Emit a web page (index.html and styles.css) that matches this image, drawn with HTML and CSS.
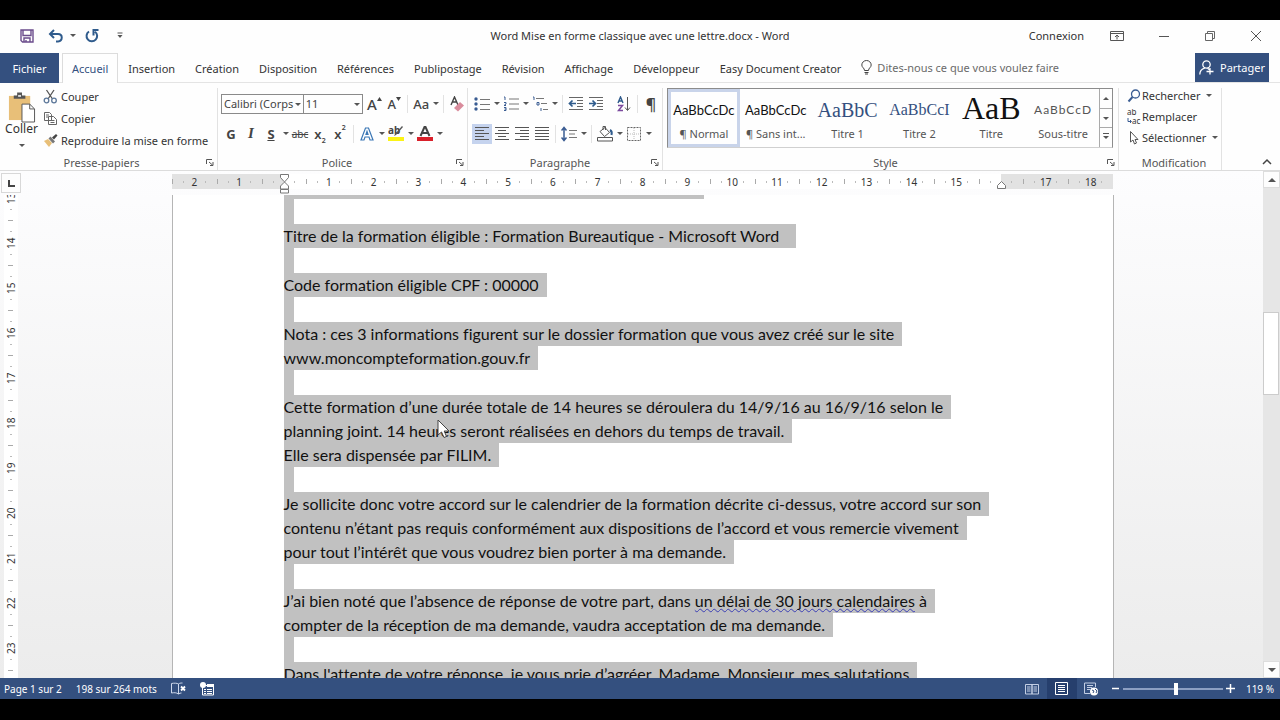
FILE: index.html
```html
<!DOCTYPE html>
<html lang="fr">
<head>
<meta charset="utf-8">
<meta name="viewport" content="width=device-width, initial-scale=1">
<title>Word Mise en forme classique avec une lettre.docx - Word</title>
<link rel="stylesheet" href="styles.css">
</head>
<body>
<div class="app">
  <header class="titlebar">
    <div class="quick">
      <button class="icon" aria-label="Enregistrer"><svg width="14" height="14" viewBox="0 0 14 14" fill="none" stroke="#6b4c8c" stroke-width="1.4"><path d="M1 1h12v12H2.500L1 11.500zM3 1v5.500h8V1M4 13V9h6v4M6 11v2"/></svg></button>
      <button class="icon" aria-label="Annuler"><svg width="16" height="14" viewBox="0 0 16 14" fill="none" stroke="#2f5b8c" stroke-width="2"><path d="M6 1L2 5l4 4M2.500 5H10c5 0 5 7 0 7.500H8"/></svg></button>
      <button class="arrow" aria-label="Options d’annulation"></button>
      <button class="icon redo" aria-label="Répéter"><svg width="16" height="15" viewBox="0 0 16 15" fill="none" stroke="#2f5b8c" stroke-width="2"><path d="M5 3.500a5.300 5.300 0 1 0 6 .2M9.500 7.500V2h5"/></svg></button>
      <button class="icon more" aria-label="Personnaliser"><svg width="8" height="7" viewBox="0 0 8 7"><path d="M1.500 1h5" stroke="#555"/><path d="M1.500 3h5L4 6z" fill="#555"/></svg></button>
    </div>
    <h1 class="doc-title">Word Mise en forme classique avec une lettre.docx - Word</h1>
    <div class="window-controls">
      <button class="connect">Connexion</button>
      <button class="icon" aria-label="Options du ruban"><svg width="14" height="12" viewBox="0 0 14 12" fill="none" stroke="#555"><path d="M.5 1.500h13v9H.5zM.5 3.500h13M7 9.500v-4M5 7l2-2 2 2"/></svg></button>
      <button class="icon" aria-label="Réduire"><svg width="12" height="12" viewBox="0 0 12 12" stroke="#555"><path d="M1 6.500h10"/></svg></button>
      <button class="icon" aria-label="Restaurer"><svg width="12" height="12" viewBox="0 0 12 12" fill="none" stroke="#666"><path d="M1.500 3.500h7v7h-7zM3.500 3.500v-2h7v7h-2"/></svg></button>
      <button class="icon" aria-label="Fermer"><svg width="12" height="12" viewBox="0 0 12 12" stroke="#555"><path d="M1 1l10 10M11 1L1 11"/></svg></button>
    </div>
  </header>

  <nav class="tabs">
    <button class="file">Fichier</button>
    <button class="tab active">Accueil</button>
    <button class="tab">Insertion</button>
    <button class="tab">Création</button>
    <button class="tab">Disposition</button>
    <button class="tab">Références</button>
    <button class="tab">Publipostage</button>
    <button class="tab">Révision</button>
    <button class="tab">Affichage</button>
    <button class="tab">Développeur</button>
    <button class="tab">Easy Document Creator</button>
    <button class="tell"><svg width="11" height="15" viewBox="0 0 11 15" fill="none" stroke="#444"><path d="M3.500 10.500C3.500 8 .8 7.500.8 5a4.700 4.500 0 0 1 9.400 0c0 2.500-2.700 3-2.700 5.500zM3.500 12.500h4M4 14h3"/></svg>Dites-nous ce que vous voulez faire</button>
    <button class="share"><svg width="15" height="15" viewBox="0 0 15 15" fill="none" stroke="#fff" stroke-width="1.300"><circle cx="7.500" cy="4.500" r="3.700"/><path d="M.8 14.500c0-3.500 2-5.500 5-6.300M8.500 8.200l2 1.500M11 8v6.500M7.500 11.500h7"/></svg>Partager</button>
  </nav>

  <section class="ribbon">
    <div class="group clipboard">
      <div class="clip-body">
        <button class="paste"><svg width="29" height="31" viewBox="0 0 30 32"><path d="M2 4h22v25H2z" fill="#e8bf78"/><path d="M7 3.500h3.500V.5h5v3H19V7H7z" fill="#555"/><path d="M11.500 3h3v2h-3z" fill="#ddd"/><path d="M15.500 12.500h8l5 5v13.500h-13z" fill="#fff" stroke="#555"/><path d="M23.500 12.500v5h5" fill="none" stroke="#555"/></svg><span>Coller</span><i class="tri"></i></button>
        <div class="clip-list">
          <button class="cmd"><svg width="15" height="15" viewBox="0 0 15 15" fill="none" stroke="#555" stroke-width="1.300"><path d="M3.500 1l6 9M11 1L5 10"/><circle cx="3.500" cy="11.500" r="2.300" stroke="#5c7799"/><circle cx="11" cy="11.500" r="2.300" stroke="#5c7799"/></svg>Couper</button>
          <button class="cmd"><svg width="15" height="15" viewBox="0 0 15 15" fill="#fff" stroke="#666"><path d="M1.500 1.500h5l2 2v6h-7zM5.500 5.500h5l3 3v5h-8zM3 4h3M3 6h2M7.500 9.500h4M7.500 11.500h4"/></svg>Copier</button>
          <button class="cmd"><svg width="15" height="15" viewBox="0 0 15 15"><path d="M1 8l4-2 4 4-3 4z" fill="#e8bf78"/><path d="M5.500 5.500l2-2 4.500 5-2 2z" fill="#777"/><path d="M9 4.500L13 1l1.500 1.500L11 6.500z" fill="#444"/></svg>Reproduire la mise en forme</button>
        </div>
      </div>
      <div class="caption"><span>Presse-papiers</span><button class="launch" aria-label="Options du presse-papiers"><svg width="8" height="8" viewBox="0 0 8 8" fill="none" stroke="#555"><path d="M.5 6V1.500H6M3 4l3.500 3M7 4v3.500H4"/></svg></button></div>
    </div>

    <div class="group font">
      <div class="row">
        <label class="combo family"><select aria-label="Police"><option>Calibri (Corps</option></select></label>
        <label class="combo size"><select aria-label="Taille"><option>11</option></select></label>
        <button class="tool grow" aria-label="Agrandir"><b>A</b><svg width="5" height="4" viewBox="0 0 5 4"><path d="M0 4L2.500 0 5 4z" fill="#444"/></svg></button>
        <button class="tool grow small" aria-label="Réduire la police"><b>A</b><svg width="5" height="4" viewBox="0 0 5 4"><path d="M0 0h5L2.500 4z" fill="#444"/></svg></button>
        <i class="sep"></i>
        <button class="tool case">Aa</button><button class="arrow" aria-label="Casse"></button>
        <i class="sep"></i>
        <button class="tool" aria-label="Effacer la mise en forme"><svg width="14" height="16" viewBox="0 0 14 16"><path d="M1 9l3.500-8L8 9M2.500 6h4" fill="none" stroke="#444" stroke-width="1.400"/><path d="M4 12l6-6 4 3.500-6 6z" fill="#d98c9c"/></svg></button>
      </div>
      <div class="row">
        <button class="tool bold">G</button>
        <button class="tool italic">I</button>
        <button class="tool under">S</button><button class="arrow" aria-label="Soulignement"></button>
        <button class="tool strike">abc</button>
        <button class="tool script">x<sub>2</sub></button>
        <button class="tool script">x<sup>2</sup></button>
        <i class="sep"></i>
        <button class="tool" aria-label="Effets de texte"><svg width="14" height="14" viewBox="0 0 14 14" fill="#fff" stroke="#3b77b5" stroke-width="1.200"><path d="M1 13L5.500 1h3L13 13h-3L9 10H5l-1 3zM6 7.500h2L7 4.500z"/></svg></button><button class="arrow" aria-label="Effets"></button>
        <button class="tool" aria-label="Surlignage"><svg width="17" height="17" viewBox="0 0 17 17"><text x="0" y="9" font-size="10" font-weight="700" font-family="Noto Sans" fill="#444">ab</text><path d="M15 2l-7 8-2 1 1-2 7-8z" fill="#555"/><path d="M0 12h16v4H0z" fill="#fbf315"/></svg></button><button class="arrow" aria-label="Couleur de surlignage"></button>
        <button class="tool" aria-label="Couleur de police"><svg width="16" height="17" viewBox="0 0 16 17"><path d="M3.500 11L7.500 2h1l4 9M5 8h6" fill="none" stroke="#444" stroke-width="2"/><path d="M0 12h16v4H0z" fill="#d9202a"/></svg></button><button class="arrow" aria-label="Couleur"></button>
      </div>
      <div class="caption"><span>Police</span><button class="launch" aria-label="Options de police"><svg width="8" height="8" viewBox="0 0 8 8" fill="none" stroke="#555"><path d="M.5 6V1.500H6M3 4l3.500 3M7 4v3.500H4"/></svg></button></div>
    </div>

    <div class="group para">
      <div class="row">
        <button class="tool" aria-label="Puces"><svg width="16" height="14" viewBox="0 0 16 14"><g fill="#3a5c92"><circle cx="2" cy="2" r="1.700"/><circle cx="2" cy="7" r="1.700"/><circle cx="2" cy="12" r="1.700"/></g><path d="M6 2.500h10M6 7.500h10M6 12.500h10" stroke="#777"/></svg></button><button class="arrow" aria-label="Types de puces"></button>
        <button class="tool" aria-label="Numérotation"><svg width="16" height="16" viewBox="0 0 16 16"><path d="M1 1h1v3M1 6.500h2v1.500l-2 1.500h2M1 11.500h2v3H1M1.500 13H3" fill="none" stroke="#3a5c92"/><path d="M6 3h10M6 8h10M6 13h10" stroke="#777"/></svg></button><button class="arrow" aria-label="Types de numéros"></button>
        <button class="tool" aria-label="Liste à plusieurs niveaux"><svg width="16" height="16" viewBox="0 0 16 16"><path d="M1 1h1v3M5 6.500h2V9H5zM9 12v3" fill="none" stroke="#3a5c92"/><path d="M4 2.500h8M9 7.500h6M11 13.500h5" stroke="#777"/></svg></button><button class="arrow" aria-label="Niveaux"></button>
        <i class="sep"></i>
        <button class="tool" aria-label="Diminuer le retrait"><svg width="16" height="14" viewBox="0 0 16 14"><path d="M1 .5h14M9 3.500h6M9 6.500h6M9 9.500h6M1 12.500h14" stroke="#666"/><path d="M8 6.500H2M4.500 3.500l-3 3 3 3" fill="none" stroke="#2f5b8c" stroke-width="1.700"/></svg></button>
        <button class="tool" aria-label="Augmenter le retrait"><svg width="16" height="14" viewBox="0 0 16 14"><path d="M1 .5h14M9 3.500h6M9 6.500h6M9 9.500h6M1 12.500h14" stroke="#666"/><path d="M1 6.500h6M4.500 3.500l3 3-3 3" fill="none" stroke="#2f5b8c" stroke-width="1.700"/></svg></button>
        <i class="gap"></i>
        <button class="tool" aria-label="Trier"><svg width="14" height="16" viewBox="0 0 14 16" fill="none"><path d="M1 7L3.500 1 6 7M2 5h3" stroke="#2f5b8c" stroke-width="1.400"/><path d="M1 9.500h4.500L1.500 14.500H6" stroke="#7b4a9e" stroke-width="1.500"/><path d="M10.500 1v13M8 11.500l2.500 3 2.500-3" stroke="#555"/></svg></button>
        <i class="sep"></i>
        <button class="tool pilcrow">¶</button>
      </div>
      <div class="row">
        <button class="tool on" aria-label="Aligner à gauche"><svg width="14" height="15" viewBox="0 0 14 15" stroke="#555"><path d="M0 1.500h14M0 4.500h9M0 7.500h14M0 10.500h9M0 13.500h14"/></svg></button>
        <button class="tool" aria-label="Centrer"><svg width="14" height="15" viewBox="0 0 14 15" stroke="#555"><path d="M0 1.500h14M3 4.500h8M0 7.500h14M3 10.500h8M0 13.500h14"/></svg></button>
        <button class="tool" aria-label="Aligner à droite"><svg width="14" height="15" viewBox="0 0 14 15" stroke="#555"><path d="M0 1.500h14M5 4.500h9M0 7.500h14M5 10.500h9M0 13.500h14"/></svg></button>
        <button class="tool" aria-label="Justifier"><svg width="14" height="15" viewBox="0 0 14 15" stroke="#555"><path d="M0 1.500h14M0 4.500h14M0 7.500h14M0 10.500h14M0 13.500h14"/></svg></button>
        <i class="sep"></i>
        <button class="tool" aria-label="Interligne"><svg width="16" height="16" viewBox="0 0 16 16" fill="none"><path d="M3 2v12M.5 4.500L3 1.500l2.500 3M.5 11.500l2.500 3 2.500-3" stroke="#3a5c92" stroke-width="1.500"/><path d="M8 4.500h8M8 8h6M8 11.500h8" stroke="#777"/></svg></button><button class="arrow" aria-label="Valeurs d’interligne"></button>
        <i class="sep"></i>
        <button class="tool" aria-label="Trame de fond"><svg width="17" height="17" viewBox="0 0 17 17" fill="none" stroke="#555"><path d="M3 6.500l5-4 4.500 5-5 4zM6 5V1.500h2.500V5"/><path d="M13 5c2 1 2 3 1.500 5" stroke="#2f5b8c" stroke-width="2"/><path d="M.5 12.500h15v3.500H.5z"/></svg></button><button class="arrow" aria-label="Couleur de trame"></button>
        <button class="tool" aria-label="Bordures"><svg width="14" height="14" viewBox="0 0 14 14" fill="none" stroke="#666"><path d="M.5.500h13v13H.5z" stroke-dasharray="2 1"/><path d="M7 1v12M1 7h12" stroke="#bbb" stroke-dasharray="1 1"/></svg></button><button class="arrow" aria-label="Types de bordures"></button>
      </div>
      <div class="caption"><span>Paragraphe</span><button class="launch" aria-label="Options de paragraphe"><svg width="8" height="8" viewBox="0 0 8 8" fill="none" stroke="#555"><path d="M.5 6V1.500H6M3 4l3.500 3M7 4v3.500H4"/></svg></button></div>
    </div>

    <div class="group styles">
      <div class="gallery">
        <button class="style chosen"><span class="sample">AaBbCcDc</span><span>¶ Normal</span></button>
        <button class="style"><span class="sample">AaBbCcDc</span><span>¶ Sans int...</span></button>
        <button class="style"><span class="sample head1">AaBbC</span><span>Titre 1</span></button>
        <button class="style"><span class="sample head2">AaBbCcI</span><span>Titre 2</span></button>
        <button class="style"><span class="sample title">AaB</span><span>Titre</span></button>
        <button class="style"><span class="sample subtitle">AaBbCcD</span><span>Sous-titre</span></button>
        <div class="spinner">
          <button aria-label="Styles précédents"><i class="tri up"></i></button>
          <button aria-label="Styles suivants"><i class="tri"></i></button>
          <button aria-label="Tous les styles"><i class="tri bar"></i></button>
        </div>
      </div>
      <div class="caption"><span>Style</span><button class="launch" aria-label="Options de style"><svg width="8" height="8" viewBox="0 0 8 8" fill="none" stroke="#555"><path d="M.5 6V1.500H6M3 4l3.500 3M7 4v3.500H4"/></svg></button></div>
    </div>

    <div class="group edit">
      <div class="edit-list">
        <button class="cmd"><svg width="14" height="14" viewBox="0 0 14 14" fill="none" stroke="#3a5c92"><circle cx="8.500" cy="5" r="4" stroke-width="1.300"/><path d="M5.500 8L1.500 12.500" stroke-width="2"/></svg>Rechercher<i class="tri"></i></button>
        <button class="cmd"><svg width="14" height="16" viewBox="0 0 14 16"><g font-family="Noto Sans" font-size="8" fill="#333"><text x="0" y="6">ab</text><text x="5" y="15">ac</text></g><path d="M1 9v3.500h3M3 11l1.500 1.500L3 14" fill="none" stroke="#3a5c92"/></svg>Remplacer</button>
        <button class="cmd"><svg width="14" height="15" viewBox="0 0 14 15" fill="#fff" stroke="#555"><path d="M3.500 1.500v10.500l2.500-2 1.500 4 2-1-1.500-3.500h3z"/></svg>Sélectionner<i class="tri"></i></button>
      </div>
      <div class="caption"><span>Modification</span></div>
    </div>
    <div class="ribbon-end"><button class="icon" aria-label="Réduire le ruban"><svg width="10" height="7" viewBox="0 0 10 7" fill="none" stroke="#444" stroke-width="1.500"><path d="M1 6l4-4 4 4"/></svg></button></div>
  </section>

  <main class="workspace">
    <div class="side">
      <button class="tabstop" aria-label="Tabulation"><svg width="7" height="7" viewBox="0 0 7 7"><path d="M1 0v6h6" fill="none" stroke="#444" stroke-width="2"/></svg></button>
      <div class="vruler"><span>13</span><span>14</span><span>15</span><span>16</span><span>17</span><span>18</span><span>19</span><span>20</span><span>21</span><span>22</span><span>23</span></div>
    </div>
    <div class="canvas">
      <div class="hruler">
        <span>2</span><span>1</span><span class="zero"><svg width="11" height="20" viewBox="0 0 11 20" fill="#fff" stroke="#777"><path d="M1.500.5h8v3l-4 4.500-4-4.500zM5.500 8l4 4v3h-8v-3zM1.500 15.500h8v3.500h-8z"/></svg></span><span>1</span><span>2</span><span>3</span><span>4</span><span>5</span><span>6</span><span>7</span><span>8</span><span>9</span><span>10</span><span>11</span><span>12</span><span>13</span><span>14</span><span>15</span><span class="zero"><svg width="11" height="20" viewBox="0 0 11 20" fill="#fff" stroke="#777"><path d="M5.500 7.500l4 4v3h-8v-3z"/></svg></span><span>17</span><span>18</span>
      </div>
      <article class="page">
        <div class="previous"></div>
        <p class="blank"></p>
        <p class="long"><span>Titre de la formation éligible : Formation Bureautique - Microsoft Word</span></p>
        <p class="blank"></p>
        <p><span>Code formation éligible CPF : 00000</span></p>
        <p class="blank"></p>
        <p><span>Nota : ces 3 informations figurent sur le dossier formation que vous avez créé sur le site</span><span>www.moncompteformation.gouv.fr</span></p>
        <p class="blank"></p>
        <p><span>Cette formation d’une durée totale de 14 heures se déroulera du 14/9/16 au 16/9/16 selon le</span><span>planning joint. 14 heures seront réalisées en dehors du temps de travail.</span><span>Elle sera dispensée par FILIM.</span></p>
        <p class="blank"></p>
        <p><span>Je sollicite donc votre accord sur le calendrier de la formation décrite ci-dessus, votre accord sur son</span><span>contenu n’étant pas requis conformément aux dispositions de l’accord et vous remercie vivement</span><span>pour tout l’intérêt que vous voudrez bien porter à ma demande.</span></p>
        <p class="blank"></p>
        <p><span>J’ai bien noté que l’absence de réponse de votre part, dans <u>un délai de 30 jours calendaires</u> à</span><span>compter de la réception de ma demande, vaudra acceptation de ma demande.</span></p>
        <p class="blank"></p>
        <p><span>Dans l'attente de votre réponse, je vous prie d’agréer, Madame, Monsieur, mes salutations</span></p>
        <svg class="pointer" width="14" height="20" viewBox="0 0 14 20"><path d="M1 1v15l3.500-3 2.500 5.500 2.500-1L7.200 12H12z" fill="#fff" stroke="#444"/></svg>
      </article>
    </div>
    <div class="scroll">
      <button aria-label="Défiler vers le haut"><i class="tri up"></i></button>
      <div class="track"><div class="thumb"></div></div>
      <button aria-label="Défiler vers le bas"><i class="tri"></i></button>
    </div>
  </main>

  <footer class="status">
    <span>Page 1 sur 2</span>
    <span>198 sur 264 mots</span>
    <button class="icon" aria-label="Vérification"><svg width="15" height="13" viewBox="0 0 15 13" fill="none" stroke="#cdd8ec"><path d="M7.500 2v10M7.500 2C6 1 3 1 .5 1.500v9.500c2.500-.5 5-.5 7 1 1-.8 2-1 3-1M7.500 2c1-.8 2-1 4-1"/><path d="M10 4.500l4 4M14 4.500l-4 4" stroke-width="1.800" stroke="#fff"/></svg></button>
    <button class="icon" aria-label="Macro"><svg width="14" height="14" viewBox="0 0 14 14"><path d="M2.500 3.500h11v9.500h-11z" fill="none" stroke="#fff"/><path d="M7 2h7v3H7z" fill="#fff"/><path d="M4 7.500h2M7 7.500h5M4 9.500h2M7 9.500h5M4 11.500h2M7 11.500h5" stroke="#fff"/><circle cx="3" cy="3" r="3" fill="#fff"/></svg></button>
    <div class="views">
      <button class="view" aria-label="Mode Lecture"><svg width="14" height="12" viewBox="0 0 14 12" fill="none" stroke="#c2cee4"><path d="M.5 1.500h6.500v9.500H.5zM7 1.500h6.500V11H7zM2 4h3.500M2 6h3.500M2 8h3.500M8.500 4H12M8.500 6H12M8.500 8H12"/></svg></button>
      <button class="view current" aria-label="Page"><svg width="13" height="13" viewBox="0 0 13 13" fill="none" stroke="#fff"><path d="M.5.500h12v12H.5zM3 3.500h7M3 5.500h7M3 7.500h7M3 9.500h7"/></svg></button>
      <button class="view" aria-label="Web"><svg width="15" height="14" viewBox="0 0 15 14"><path d="M6 11.500H.5V1h11v4M3 3.500h6M3 5.500h5M3 7.500h3" fill="none" stroke="#c2cee4"/><circle cx="10" cy="9.500" r="4" fill="#fff"/><path d="M8 8l2 1-1 2M11 7l2 2-1 2" stroke="#34507f" fill="none"/></svg></button>
    </div>
    <div class="zoom">
      <button aria-label="Zoom arrière"><svg width="9" height="9" viewBox="0 0 9 9"><path d="M1 4.500h7" stroke="#fff" stroke-width="1.500"/></svg></button>
      <input type="range" min="0" max="100" value="53" aria-label="Zoom">
      <button aria-label="Zoom avant"><svg width="9" height="9" viewBox="0 0 9 9"><path d="M0 4.500h9M4.500 0v9" stroke="#fff" stroke-width="1.500"/></svg></button>
      <output>119 %</output>
    </div>
  </footer>
</div>
</body>
</html>
```
FILE: styles.css
```css
* { box-sizing: border-box; }
body { margin: 0; background: #000; font-family: "Noto Sans", "Open Sans", sans-serif; font-size: 11px; color: #333; }
button { border: 0; padding: 0; background: none; font: inherit; color: inherit; display: inline-flex; align-items: center; justify-content: center; white-space: nowrap; }
svg { flex: none; display: block; }
i { font-style: normal; }
.app { height: 100vh; padding: 20px 0 21px; display: flex; flex-direction: column; }
.app > * { background-color: #fefefe; flex: none; }

.tri, .arrow::before { content: ""; flex: none; border: 3px solid transparent; border-top-color: #555; border-bottom: 0; }
.tri.up { border: 3px solid transparent; border-bottom-color: #555; border-top: 0; }

.titlebar { height: 33px; padding-bottom: 2px; display: grid; grid-template-columns: 1fr auto 1fr; align-items: center; }
.quick { display: flex; align-items: center; padding-left: 20px; }
.quick .icon { margin-right: 14px; }
.quick .icon + .arrow { margin-left: -11px; width: 12px; }
.quick .redo { margin: 0 16px 0 5px; }
.doc-title { margin: 0; font-size: 11px; font-weight: 400; color: #333; }
.window-controls { display: flex; align-items: center; justify-content: flex-end; gap: 34px; padding-right: 18px; }
.window-controls .connect { margin-right: -8px; }

.tabs { height: 30px; display: flex; align-items: stretch; border-bottom: 1px solid #e4e4e4; }
.file { width: 59px; background: #34507f; color: #fff; margin-right: 3px; margin-bottom: -1px; }
.tab { padding: 0 9px; border: 1px solid transparent; border-bottom: 0; }
.tab.active { color: #34507f; border-color: #dcdcdc; margin-bottom: -1px; background: #fefefe; }
.tell { color: #6a6a6a; gap: 5px; margin-left: 10px; }
.share { margin-left: auto; margin-right: 11px; width: 74px; gap: 6px; background: #34507f; color: #fff; }

.ribbon { height: 88px; display: flex; border-bottom: 1px solid #dcdcdc; padding: 5px 0 0; }
.group { display: flex; flex-direction: column; border-right: 1px solid #e2e2e2; }
.clipboard { width: 218px; }
.font { width: 250px; padding-left: 3px; }
.para { width: 195px; padding-left: 4px; }
.styles { flex: 1; min-width: 0; padding-left: 4px; }
.edit { width: 103px; padding-left: 8px; }
.ribbon-end { width: 58px; display: flex; align-items: flex-end; justify-content: flex-end; padding: 0 8px 5px 0; }
.caption { margin-top: auto; height: 16px; display: flex; align-items: center; color: #555; }
.caption span { flex: 1; text-align: center; }
.launch { width: 14px; }
.clip-body { display: flex; }
.paste { width: 43px; flex-direction: column; font-size: 12px; line-height: 16px; }
.paste svg { margin-bottom: -2px; }
.paste .tri { margin-top: 7px; }
.clip-list, .edit-list { display: flex; flex-direction: column; align-items: flex-start; margin-top: -3px; }
.cmd { height: 22px; gap: 3px; }
.edit-list .cmd { height: 21px; gap: 1px; }
.edit-list .tri { margin-left: 5px; }

.row { height: 29px; display: flex; align-items: center; margin-top: 1px; }
.tool { width: 20px; height: 20px; font-size: 13px; color: #444; }
.arrow { width: 9px; height: 20px; }
.sep { width: 1px; height: 18px; background: #e2e2e2; margin: 0 3px; }
.gap { width: 8px; }
.on { background: #c5d3ee; }
.combo { position: relative; height: 20px; border: 1px solid #8a8a8a; }
.combo + .combo { border-left: 0; margin-right: 1px; }
.combo::after { content: ""; position: absolute; right: 2px; top: 8px; border: 3px solid transparent; border-top-color: #555; border-bottom: 0; }
.combo select { appearance: none; border: 0; background: transparent; width: 100%; height: 18px; padding: 0 0 0 2px; font: inherit; color: #444; }
.family { width: 83px; }
.size { width: 60px; }
.grow { align-items: flex-start; font-size: 15px; line-height: 20px; }
.grow b, .case { font-weight: 500; }
.grow svg { margin-top: 3px; }
.grow.small { font-size: 13px; }
.bold { font-weight: 700; }
.italic { font-family: "Liberation Serif", serif; font-style: italic; font-weight: 700; font-size: 15px; }
.under { font-weight: 700; text-decoration: underline; }
.strike { text-decoration: line-through; font-size: 10px; }
.script { font-weight: 600; }
.script sub, .script sup { font-size: 7px; line-height: 1; }
.script sub { align-self: flex-end; }
.script sup { align-self: flex-start; }
.pilcrow { font-size: 16px; font-weight: 600; }

.gallery { height: 60px; display: grid; grid-template-columns: repeat(6, minmax(0, 1fr)) 13px; border: 1px solid #8c8c8c; border-bottom-color: #d0d0d0; margin-right: 5px; }
.style { flex-direction: column; color: #555; }
.sample { height: 28px; line-height: 28px; margin-bottom: 2px; color: #111; font-family: Lato, sans-serif; font-size: 13px; }
.chosen { border: 3px solid #c9d4ea; }
.head1, .head2, .title { font-family: "Liberation Serif", serif; color: #34507f; }
.head1 { font-size: 20px; }
.head2 { font-size: 16px; }
.title { font-size: 32px; line-height: 24px; color: #111; }
.subtitle { letter-spacing: 1px; color: #555; font-size: 12px; }
.spinner { display: flex; flex-direction: column; border-left: 1px solid #aaa; }
.spinner button { flex: 1; }
.spinner button + button { border-top: 1px solid #aaa; }
.bar { position: relative; }
.bar::before { content: ""; position: absolute; left: -3px; top: -6px; width: 6px; height: 1px; background: #555; }

.app > .workspace { flex: 1; min-height: 0; display: flex; background: linear-gradient(#fdfdfe, #ececec); overflow: hidden; }
.side { width: 22px; display: flex; flex-direction: column; align-items: center; font-size: 10px; }
.tabstop { width: 20px; height: 20px; margin-top: 2px; border: 1px solid #d8d8d8; background: #fdfdfd; }
.vruler { flex: 1; min-height: 0; overflow: hidden; width: 14px; background: #fff; margin-top: -17px; clip-path: inset(19px 0 0 0); }
.vruler span { height: 45px; display: flex; align-items: center; justify-content: center; writing-mode: vertical-rl; transform: rotate(180deg); background: linear-gradient(#aaa, #aaa) 50% 0 / 5px 1px no-repeat, linear-gradient(#bbb, #bbb) 50% 11px / 2px 1px no-repeat, linear-gradient(#bbb, #bbb) 50% 34px / 2px 1px no-repeat; }
.canvas { flex: 1; min-width: 0; display: flex; flex-direction: column; align-items: center; }
.hruler { flex: none; z-index: 1; width: 100%; max-width: 941px; height: 15px; margin: 3px 0 6px; display: flex; font-size: 10px; background: linear-gradient(90deg, #e2e2e2 111px, #fff 111px calc(100% - 112px), #e2e2e2 calc(100% - 112px)); }
.hruler span { flex: 1; display: flex; align-items: center; justify-content: center; background: linear-gradient(#aaa, #aaa) 0 50% / 1px 5px no-repeat, linear-gradient(#bbb, #bbb) 25% 50% / 1px 2px no-repeat, linear-gradient(#bbb, #bbb) 75% 50% / 1px 2px no-repeat; }
.hruler .zero { align-items: flex-start; }
.page { position: relative; flex: 1; min-height: 0; width: 100%; max-width: 942px; overflow: hidden; background: #fff; border: 1px solid #b5b5b5; border-width: 0 1px; padding: 0 100px 0 111px; color: #111; font-family: Lato, sans-serif; font-size: 16px; line-height: 24px; font-variant-ligatures: none; }
.page p { margin: 0; }
.page p span { display: block; width: fit-content; height: 24px; padding-right: 8px; background: #c1c1c1; white-space: nowrap; }
.page p.long span { padding-right: 17px; }
.page p.blank { width: 10px; height: 25px; background: #c1c1c1; }
.previous { width: 420px; height: 4px; background: #c1c1c1; }
u { text-decoration: underline wavy #3b3fb5 1px; text-underline-offset: 1px; text-decoration-skip-ink: none; }
.pointer { position: absolute; left: 264px; top: 224px; }

.scroll { width: 17px; display: flex; flex-direction: column; background: #e6e6e6; }
.scroll button { height: 17px; background: #fdfdfd; border: 1px solid #ddd; }
.scroll .tri { border-width: 0 4px 4px; }
.scroll button:last-child .tri { border-width: 4px 4px 0; }
.track { flex: 1; padding: 124px 1px 0 0; }
.thumb { height: 83px; background: #fff; border: 1px solid #ccc; }

.app > .status { height: 21px; display: flex; align-items: center; background: #34507f; color: #fff; gap: 14px; padding: 0 6px 0 4px; font-size: 10px; }
.views { margin-left: auto; display: flex; align-items: stretch; height: 21px; }
.view { width: 30px; }
.current { background: #263f6d; }
.zoom { display: flex; align-items: center; gap: 3px; margin-left: -10px; }
.zoom output { margin-left: 8px; }
.zoom input { appearance: none; width: 100px; height: 14px; margin: 0; background: linear-gradient(#8c9fc2, #8c9fc2) 0 50% / 100% 2px no-repeat; }
.zoom input::-webkit-slider-thumb { appearance: none; width: 4px; height: 12px; background: #fff; }
```
